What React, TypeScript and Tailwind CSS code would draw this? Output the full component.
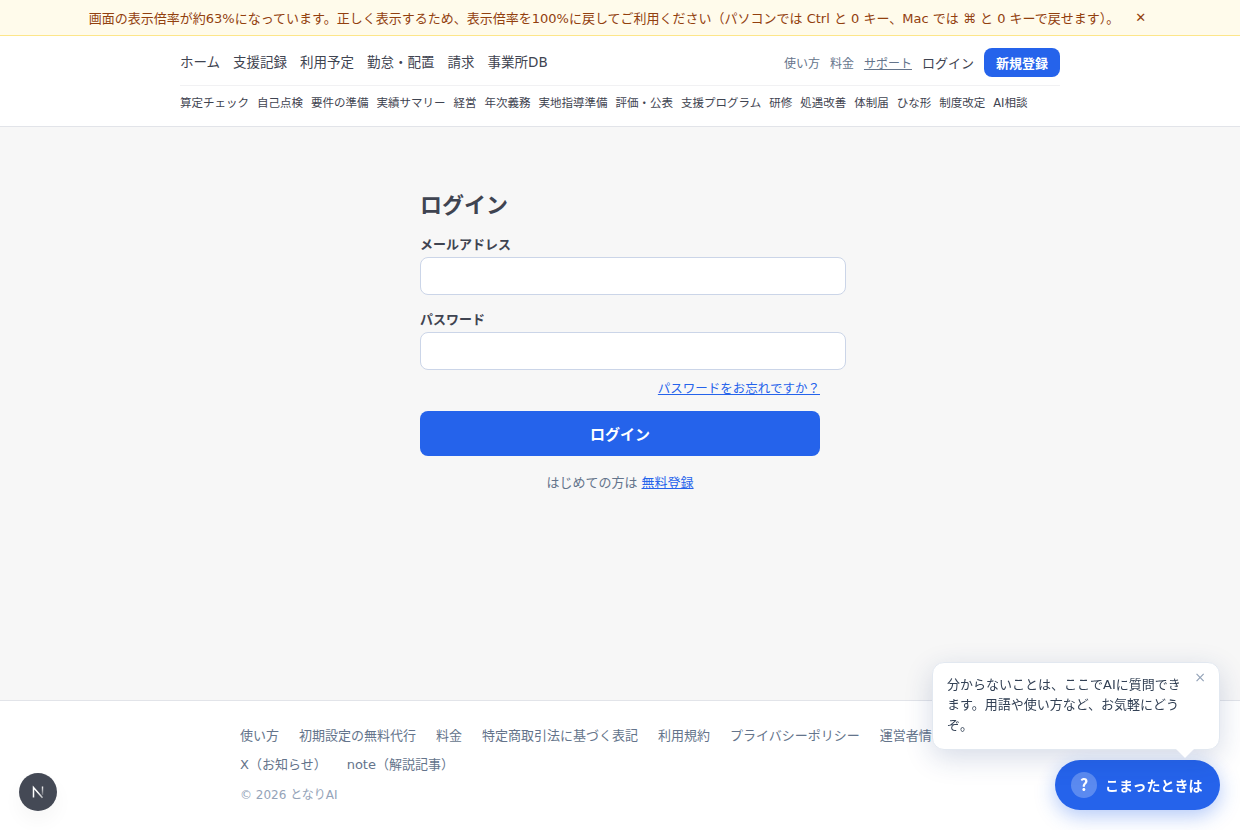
import React from "react";

const mainLinks = ["ホーム", "支援記録", "利用予定", "勤怠・配置", "請求", "事業所DB"];

const subLinks = [
  "算定チェック",
  "自己点検",
  "要件の準備",
  "実績サマリー",
  "経営",
  "年次義務",
  "実地指導準備",
  "評価・公表",
  "支援プログラム",
  "研修",
  "処遇改善",
  "体制届",
  "ひな形",
  "制度改定",
  "AI相談",
];

const footerLinks = [
  "使い方",
  "初期設定の無料代行",
  "料金",
  "特定商取引法に基づく表記",
  "利用規約",
  "プライバシーポリシー",
  "運営者情報",
  "X（お知らせ）",
  "note（解説記事）",
];

function ZoomNotice() {
  return (
    <div className="flex h-9 items-center justify-center gap-3 border-b border-[#fde68a] bg-[#fffbeb] pt-0.5 pr-px text-[13px] leading-5 text-[#92400e]">
      <span className="whitespace-nowrap">
        画面の表示倍率が約63%になっています。正しく表示するため、表示倍率を100%に戻してご利用ください（パソコンでは
        Ctrl と 0 キー、Mac では ⌘ と 0 キーで戻せます）。
      </span>
      <button type="button" className="px-1 pb-px text-[13px]" aria-label="閉じる">
        ✕
      </button>
    </div>
  );
}

function Header() {
  return (
    <header className="h-[91px] border-b border-[#e2e4e9] bg-white pt-3">
      <div className="mx-auto w-[880px]">
        <div className="flex h-[38px] items-start justify-between border-b border-[#f1f1f3]">
          <nav className="flex h-7 items-center gap-[13px] text-[13.5px] leading-5 text-[#3f4451]">
            {mainLinks.map((label) => (
              <a key={label} href="#" className="whitespace-nowrap">
                {label}
              </a>
            ))}
          </nav>
          <div className="flex h-[29px] items-center gap-2.5 text-xs text-[#64748b]">
            <a href="#" className="pt-0.5">使い方</a>
            <a href="#" className="pt-0.5">料金</a>
            <a href="#" className="pt-0.5 underline">
              サポート
            </a>
            <a href="#" className="pt-0.5 text-[13px] text-[#3f4451]">
              ログイン
            </a>
            <a
              href="#"
              className="flex h-[29px] items-center rounded-lg bg-[#2563eb] px-3 pt-0.5 text-[13px] font-bold text-white"
            >
              新規登録
            </a>
          </div>
        </div>
        <nav className="flex h-[35px] items-center gap-2 text-[11.5px] text-[#3f4451]">
          {subLinks.map((label) => (
            <a key={label} href="#" className="whitespace-nowrap">
              {label}
            </a>
          ))}
        </nav>
      </div>
    </header>
  );
}

function Field({ label, type }: { label: string; type: string }) {
  return (
    <label className="mb-[15px] block text-[13px] leading-5 font-bold text-[#3f4451]">
      {label}
      <input
        type={type}
        className="mt-0.5 block h-[38px] w-[426px] rounded-lg border border-[#cbd5e8] bg-white px-3 text-[15px] font-normal outline-none"
      />
    </label>
  );
}

function LoginForm() {
  return (
    <main className="h-[573px] pt-[63px]">
      <form className="mx-auto w-[400px]">
        <h1 className="mb-[13px] text-[22px] leading-8 font-bold text-[#3f4451]">ログイン</h1>
        <Field label="メールアドレス" type="email" />
        <Field label="パスワード" type="password" />
        <div className="-mt-1.5 mb-3 flex justify-end text-[12.5px] leading-5">
          <a href="#" className="text-[#2563eb] underline">
            パスワードをお忘れですか？
          </a>
        </div>
        <button
          type="submit"
          className="h-[45px] w-full rounded-lg bg-[#2563eb] pt-[3px] text-[15px] font-bold text-white"
        >
          ログイン
        </button>
        <p className="mt-[17px] text-center text-[13px] leading-5 text-[#64748b]">
          はじめての方は{" "}
          <a href="#" className="text-[#2563eb] underline">
            無料登録
          </a>
        </p>
      </form>
    </main>
  );
}

function Footer() {
  return (
    <footer className="h-[130px] border-t border-[#e2e4e9] bg-white pt-[25px]">
      <div className="mx-auto w-[760px]">
        <nav className="flex flex-wrap gap-x-5 gap-y-[9px] text-[13px] leading-5 text-[#64748b]">
          {footerLinks.map((label) => (
            <a key={label} href="#" className="whitespace-nowrap">
              {label}
            </a>
          ))}
        </nav>
        <p className="mt-2.5 text-xs leading-5 text-[#94a3b8]">© 2026 となりAI</p>
      </div>
    </footer>
  );
}

function HelpWidget() {
  return (
    <div className="fixed right-5 bottom-5 flex flex-col items-end gap-2.5 will-change-transform">
      <div className="relative h-[88px] w-[288px] rounded-xl border border-[#e2e8f0] bg-white pt-3 pl-3.5 text-[13px] leading-[20.4px] text-[#334155] shadow-[0_8px_28px_rgba(30,58,120,0.18)]">
        <p className="w-[236px]">
          分からないことは、ここでAIに質問できます。用語や使い方など、お気軽にどうぞ。
        </p>
        <button
          type="button"
          aria-label="閉じる"
          className="absolute top-1.5 right-[13px] text-sm leading-4 text-[#94a3b8]"
        >
          ×
        </button>
        <span className="absolute right-[25px] -bottom-[9px] h-0 w-0 border-x-[9px] border-t-[9px] border-x-transparent border-t-white" />
      </div>
      <button
        type="button"
        className="flex h-[50px] w-[165px] items-center gap-2 rounded-full bg-[#2563eb] pl-4 text-sm font-bold text-white shadow-[0_6px_20px_rgba(37,99,235,0.35)]"
      >
        <span className="flex h-[26px] w-[26px] items-center justify-center rounded-full bg-white/25 pb-0.5 font-['Noto_Sans_CJK_JP',sans-serif] text-base leading-none">
          ?
        </span>
        <span className="pt-0.5 whitespace-nowrap">こまったときは</span>
      </button>
    </div>
  );
}

function DevBadge() {
  return (
    <div className="fixed bottom-[19px] left-[19px] flex h-[38px] w-[38px] items-center justify-center rounded-full bg-[#444955] shadow-[0_10px_20px_rgba(0,0,0,0.04)]">
      <svg width="14" height="14" viewBox="0 0 14 14" fill="none">
        <defs>
          <linearGradient id="n-diagonal" x1="7" y1="7" x2="12" y2="13" gradientUnits="userSpaceOnUse">
            <stop stopColor="white" />
            <stop offset="1" stopColor="white" stopOpacity="0.6" />
          </linearGradient>
          <linearGradient id="n-stem" x1="11.5" y1="1" x2="11.5" y2="11" gradientUnits="userSpaceOnUse">
            <stop stopColor="white" />
            <stop offset="1" stopColor="white" stopOpacity="0.1" />
          </linearGradient>
        </defs>
        <path d="M2.5 12.5V2.5L11.5 12.8" stroke="url(#n-diagonal)" strokeWidth="1.5" />
        <path d="M11.5 1.5V10" stroke="url(#n-stem)" strokeWidth="1.4" />
      </svg>
    </div>
  );
}

export default function App() {
  return (
    <div className="h-[830px] overflow-hidden bg-[#f7f7f7] font-['DejaVu_Sans','Noto_Sans_CJK_JP',sans-serif]" lang="ja">
      <ZoomNotice />
      <Header />
      <LoginForm />
      <Footer />
      <HelpWidget />
      <DevBadge />
    </div>
  );
}
